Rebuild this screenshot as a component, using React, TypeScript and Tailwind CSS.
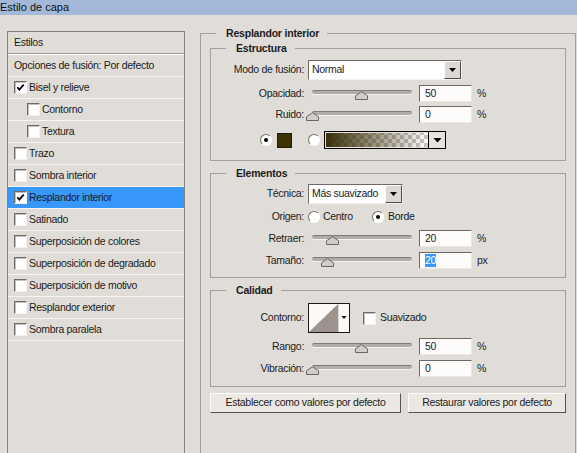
import React from "react";

type Item = { label: string; checked?: boolean; indent?: boolean; active?: boolean };

const items: Item[] = [
  { label: "Bisel y relieve", checked: true },
  { label: "Contorno", indent: true },
  { label: "Textura", indent: true },
  { label: "Trazo" },
  { label: "Sombra interior" },
  { label: "Resplandor interior", checked: true, active: true },
  { label: "Satinado" },
  { label: "Superposición de colores" },
  { label: "Superposición de degradado" },
  { label: "Superposición de motivo" },
  { label: "Resplandor exterior" },
  { label: "Sombra paralela" },
];

function Check({ checked }: { checked?: boolean }) {
  return (
    <span className="flex h-[13px] w-[13px] shrink-0 items-center justify-center border border-t-[#6f6c68] border-l-[#6f6c68] border-r-[#f4f2ef] border-b-[#f4f2ef] bg-white shadow-[inset_1px_1px_0_#c4c0bc]">
      {checked && (
        <svg width="9" height="9" viewBox="0 0 9 9">
          <path d="M1.3 4.2 L3.4 6.6 L7.7 1.6" fill="none" stroke="#000" strokeWidth="1.7" />
        </svg>
      )}
    </span>
  );
}

function Radio({ on }: { on?: boolean }) {
  return (
    <span className="flex h-[12px] w-[12px] shrink-0 items-center justify-center rounded-full border border-t-[#77736f] border-l-[#77736f] border-r-white border-b-white bg-white">
      {on && <span className="h-[4px] w-[4px] rounded-full bg-black" />}
    </span>
  );
}

function Slider({ at }: { at: number }) {
  return (
    <div className="relative ml-[8px] h-[17px] w-[100px] shrink-0">
      <div className="mt-[5px] h-[4px] rounded-full border-t border-[#7f7b77] bg-[#b1ada9] shadow-[0_1px_0_#f5f3f0]" />
      {/* thumb */}
      <svg className="absolute top-[6px]" style={{ left: at - 6 }} width="13" height="9" viewBox="0 0 13 9">
        <path d="M0.5 8.5 V4.8 L6.5 0.7 L12.5 4.8 V8.5 Z" fill="#d2cdc8" stroke="#6b6763" />
      </svg>
    </div>
  );
}

function Field({ value, sel }: { value: string; sel?: boolean }) {
  return (
    <div className="ml-[7px] flex h-[17px] w-[53px] shrink-0 items-center border border-t-[#6d6965] border-l-[#6d6965] border-r-[#ebe8e4] border-b-[#ebe8e4] bg-[#fdfcfb] pl-[5px]">
      {sel ? <span className="bg-[#3399ff] leading-[13px] text-white">{value}</span> : value}
    </div>
  );
}

function SliderRow({
  label,
  at,
  value,
  unit,
  sel,
  className,
}: {
  label: string;
  at: number;
  value: string;
  unit: string;
  sel?: boolean;
  className: string;
}) {
  return (
    <div className={"flex h-[17px] items-center " + className}>
      <span className="w-[93px] shrink-0 text-right">{label}</span>
      <Slider at={at} />
      <Field value={value} sel={sel} />
      <span className="ml-[5px]">{unit}</span>
    </div>
  );
}

function Select({ text, className }: { text: string; className: string }) {
  return (
    <div className={"ml-[4px] flex h-[20px] items-stretch border border-t-[#6d6965] border-l-[#6d6965] border-r-[#f2f0ed] border-b-[#f2f0ed] bg-white " + className}>
      <span className="flex flex-1 items-center whitespace-nowrap pl-[3px]">{text}</span>
      <span className="flex w-[17px] items-center justify-center border border-t-[#fbfaf8] border-l-[#fbfaf8] border-r-[#4f4c49] border-b-[#4f4c49] bg-[#dcd8d4]">
        <svg width="7" height="4" viewBox="0 0 7 4">
          <path d="M0 0h7L3.5 4z" fill="#000" />
        </svg>
      </span>
    </div>
  );
}

function Group({ title, className, children }: { title: string; className: string; children: React.ReactNode }) {
  return (
    <fieldset className={"min-w-0 border border-[#a29e9a] " + className}>
      <legend className="ml-[15px] pl-[10px] pr-[8px] text-[10.5px] font-bold leading-[14px] tracking-[-0.2px]">{title}</legend>
      {children}
    </fieldset>
  );
}

function Button({ label, className }: { label: string; className: string }) {
  return (
    <button className={"flex h-[20px] items-center justify-center whitespace-nowrap border border-t-[#fdfcfb] border-l-[#fdfcfb] border-r-[#55524f] border-b-[#55524f] bg-[#ebe8e4] " + className}>
      {label}
    </button>
  );
}

export default function App() {
  return (
    <div className="h-[453px] w-[577px] overflow-hidden bg-[#e0ddd9] font-['Liberation_Sans',sans-serif] text-[10.5px] tracking-[-0.3px] text-[#1b1b1b]">
      {/* title bar */}
      <div className="h-[15px] bg-[#a4b9d9] text-[11px] leading-[15px] tracking-normal text-[#111]">Estilo de capa</div>

      <div className="flex">
        {/* styles list */}
        <div className="ml-[7px] mt-[16px] h-[460px] w-[178px] shrink-0 border border-[#85827e]">
          <div className="flex h-[22px] items-center border-b border-[#9f9b97] pl-[6px] shadow-[0_1px_0_#fff]">Estilos</div>
          <div className="mt-[1px] flex h-[22px] items-center border-b border-[#f7f5f2] pl-[6px]">Opciones de fusión: Por defecto</div>
          {items.map((it) => (
            <div
              key={it.label}
              className={
                "flex h-[22px] items-center gap-[2px] border-b border-[#f7f5f2] " +
                (it.indent ? "pl-[19px] " : "pl-[6px] ") +
                (it.active ? "bg-[#3797fb]" : "")
              }
            >
              <Check checked={it.checked} />
              <span>{it.label}</span>
            </div>
          ))}
        </div>

        {/* settings */}
        <fieldset className="ml-[15px] mt-[11px] w-[376px] min-w-0 shrink-0 border border-[#a29e9a] px-[9px] pb-[40px]">
          <legend className="ml-[6px] pl-[10px] pr-[8px] text-[10.5px] font-bold leading-[14px] tracking-[-0.2px]">Resplandor interior</legend>

          <Group title="Estructura" className="mt-[1px] pb-[11px]">
            <div className="mt-[5px] flex h-[20px] items-center">
              <span className="w-[93px] shrink-0 text-right">Modo de fusión:</span>
              <Select text="Normal" className="w-[154px]" />
            </div>
            <SliderRow label="Opacidad:" at={49} value="50" unit="%" className="mt-[5px]" />
            <SliderRow label="Ruido:" at={0} value="0" unit="%" className="mt-[4px]" />
            <div className="mt-[8px] flex h-[18px] items-center">
              <span className="ml-[49px]">
                <Radio on />
              </span>
              <span className="ml-[5px] h-[15px] w-[15px] border border-[#1e1a08] bg-[#3d3206]" />
              <span className="ml-[16px]">
                <Radio />
              </span>
              <svg className="ml-[4px]" width="122" height="18" viewBox="0 0 122 18">
                <defs>
                  <pattern id="chk" width="8" height="8" patternUnits="userSpaceOnUse">
                    <rect width="8" height="8" fill="#fff" />
                    <rect width="4" height="4" fill="#c9c7c4" />
                    <rect x="4" y="4" width="4" height="4" fill="#c9c7c4" />
                  </pattern>
                  <linearGradient id="gl">
                    <stop offset="0" stopColor="#3a2f0a" />
                    <stop offset="1" stopColor="#3a2f0a" stopOpacity="0" />
                  </linearGradient>
                </defs>
                <rect x="0.5" y="0.5" width="121" height="17" fill="#e6e3df" stroke="#000" />
                <rect x="2" y="2" width="102" height="14" fill="url(#chk)" />
                <rect x="2" y="2" width="102" height="14" fill="url(#gl)" />
                <line x1="104.5" y1="0" x2="104.5" y2="18" stroke="#000" />
                <path d="M109.5 7h8l-4 4.5z" fill="#000" />
              </svg>
            </div>
          </Group>

          <Group title="Elementos" className="mt-[5px] pb-[8px]">
            <div className="mt-[4px] flex h-[20px] items-center">
              <span className="w-[93px] shrink-0 text-right">Técnica:</span>
              <Select text="Más suavizado" className="w-[95px]" />
            </div>
            <div className="mt-[5px] flex h-[16px] items-center">
              <span className="w-[93px] shrink-0 text-right">Origen:</span>
              <span className="ml-[4px]">
                <Radio />
              </span>
              <span className="ml-[3px] w-[49px]">Centro</span>
              <Radio on />
              <span className="ml-[4px]">Borde</span>
            </div>
            <SliderRow label="Retraer:" at={20} value="20" unit="%" className="mt-[5px]" />
            <SliderRow label="Tamaño:" at={15} value="20" unit="px" sel className="mt-[5px]" />
          </Group>

          <Group title="Calidad" className="mt-[5px] pb-[9px]">
            <div className="mt-[6px] flex h-[30px] items-center">
              <span className="w-[93px] shrink-0 text-right">Contorno:</span>
              <svg className="ml-[4px]" width="42" height="30" viewBox="0 0 42 30">
                <rect x="0.5" y="0.5" width="41" height="29" fill="#fbfaf9" stroke="#1a1a1a" />
                <polygon points="1,29 30,1 30,29" fill="#9c938c" />
                <line x1="30.5" y1="1" x2="30.5" y2="29" stroke="#d8d4d0" />
                <path d="M33.5 13h5l-2.5 3z" fill="#000" />
              </svg>
              <span className="ml-[13px]">
                <Check />
              </span>
              <span className="ml-[4px]">Suavizado</span>
            </div>
            <SliderRow label="Rango:" at={49} value="50" unit="%" className="mt-[5px]" />
            <SliderRow label="Vibración:" at={0} value="0" unit="%" className="mt-[5px]" />
          </Group>

          <div className="mt-[6px] flex gap-[7px]">
            <Button label="Establecer como valores por defecto" className="w-[191px]" />
            <Button label="Restaurar valores por defecto" className="w-[158px]" />
          </div>
        </fieldset>
      </div>
    </div>
  );
}
